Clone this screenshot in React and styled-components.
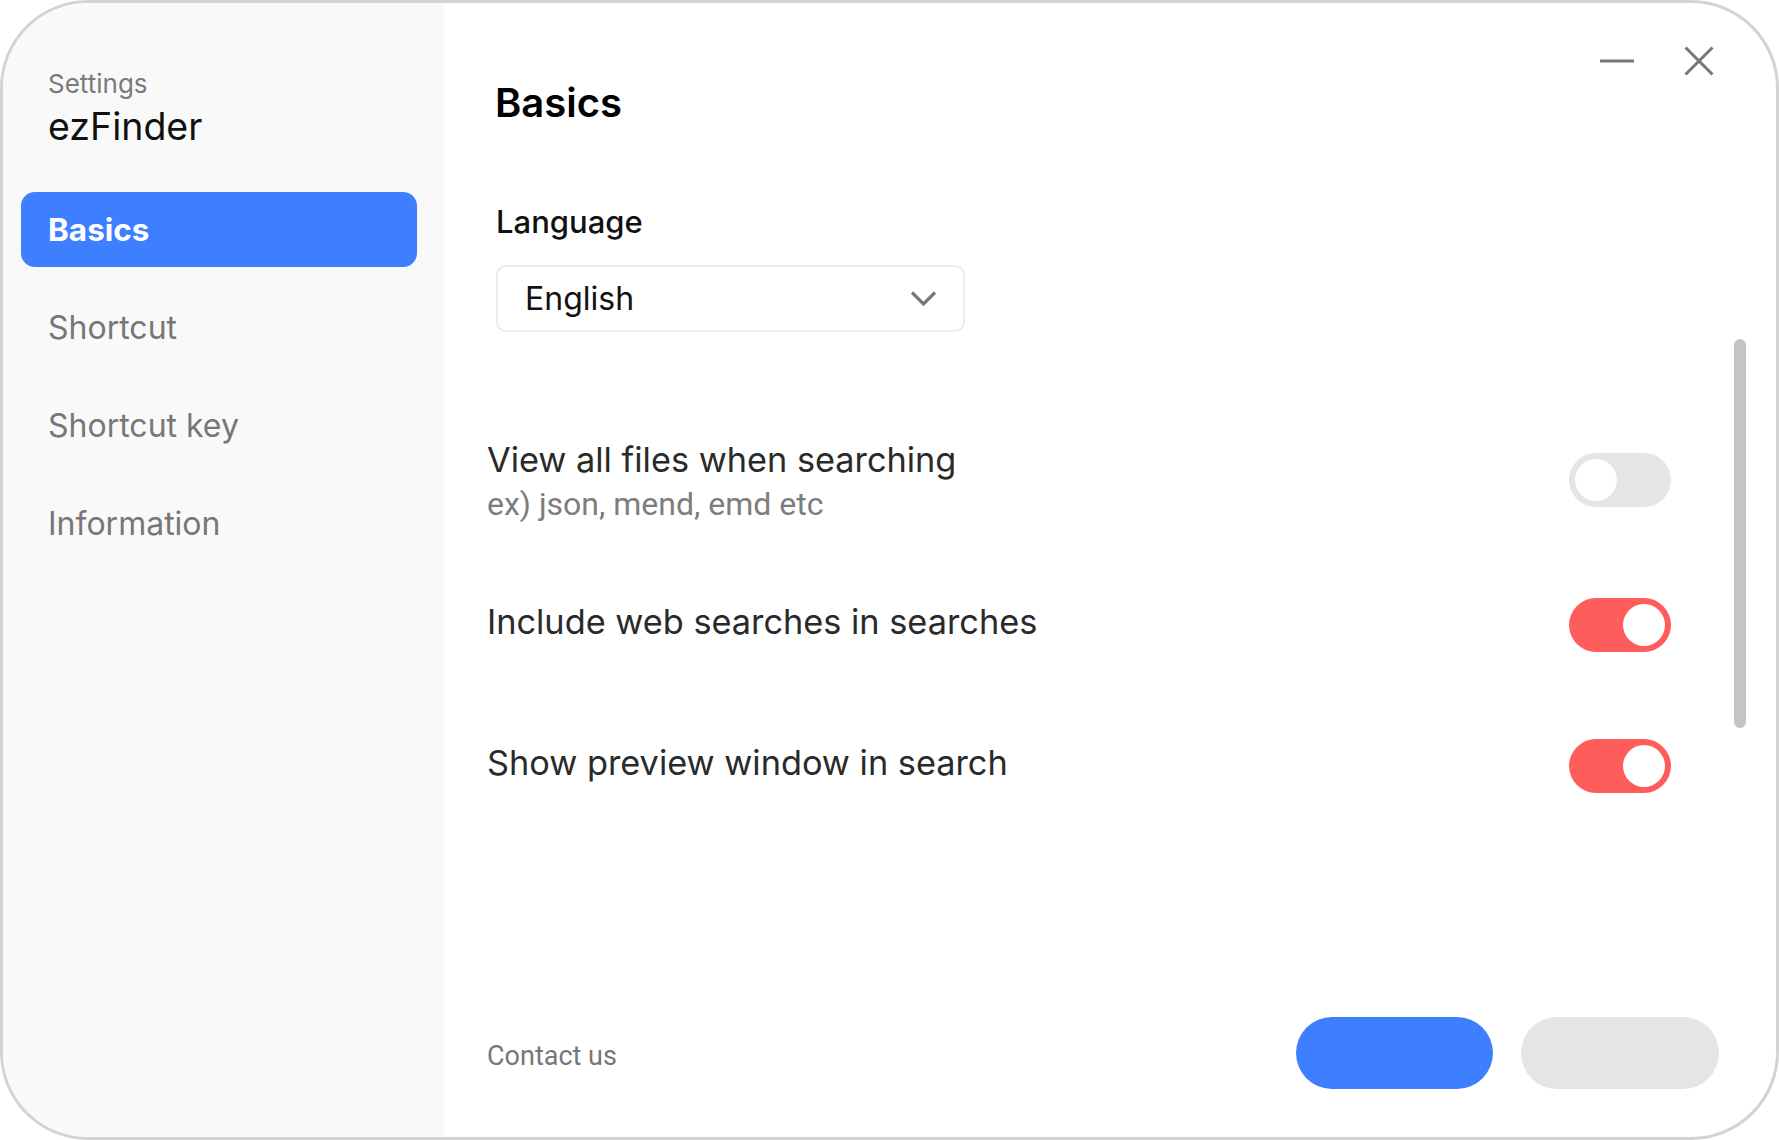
import React from "react";
import styled, { createGlobalStyle, css } from "styled-components";

const GlobalStyle = createGlobalStyle`
  html, body {
    margin: 0;
    padding: 0;
    background: #ffffff;
  }
  * { box-sizing: border-box; }
  body {
    font-family: Inter, "Noto Sans", sans-serif;
    -webkit-font-smoothing: antialiased;
  }
`;

const Window = styled.div`
  width: 1779px;
  height: 1140px;
  border: 3px solid #d3d3d3;
  border-radius: 88px;
  overflow: hidden;
  display: flex;
  background: #ffffff;
`;

const Sidebar = styled.aside`
  width: 441px;
  flex: 0 0 441px;
  background: #f9f9f9;
  padding: 65px 24px 0 18px;
  display: flex;
  flex-direction: column;
`;

const Brand = styled.div`
  padding-left: 27px;
  display: flex;
  flex-direction: column;
`;

const Caption = styled.div`
  font-size: 26px;
  line-height: 32px;
  color: #7a7a7a;
`;

const AppName = styled.div`
  margin-top: 5px;
  font-size: 37.5px;
  line-height: 44px;
  color: #111111;
`;

const Nav = styled.nav`
  margin-top: 43px;
  display: flex;
  flex-direction: column;
  gap: 23px;
`;

const NavItem = styled.div`
  width: 396px;
  height: 75px;
  border-radius: 14px;
  padding-left: 27px;
  display: flex;
  align-items: center;
  font-size: 32px;
  line-height: 40px;
  color: #777777;
  ${(p) =>
    p.$active &&
    css`
      background: #3d7fff;
      color: #ffffff;
      font-weight: 700;
      font-size: 31.5px;
    `}
`;

const Main = styled.main`
  position: relative;
  flex: 1;
  display: flex;
  flex-direction: column;
`;

const Header = styled.div`
  display: flex;
  justify-content: space-between;
  align-items: flex-start;
  padding: 0 62px 0 51px;
`;

const Title = styled.h1`
  margin: 76px 0 0;
  font-size: 40px;
  line-height: 48px;
  font-weight: 600;
  color: #000000;
`;

const Controls = styled.div`
  margin-top: 43px;
  display: flex;
  align-items: center;
  gap: 50px;
`;

const ControlIcon = styled.svg`
  display: block;
  height: 30px;
  color: #777777;
`;

const Field = styled.div`
  padding-left: 52px;
  display: flex;
  flex-direction: column;
  align-items: flex-start;
`;

const FieldLabel = styled.div`
  margin-top: 76px;
  font-size: 31px;
  line-height: 38px;
  font-weight: 500;
  color: #111111;
`;

const Select = styled.div`
  margin-top: 24px;
  width: 469px;
  height: 67px;
  border: 2px solid #ececec;
  border-radius: 10px;
  padding: 0 26px 0 27px;
  display: flex;
  align-items: center;
  justify-content: space-between;
  font-size: 32px;
  color: #111111;
`;

const Options = styled.div`
  padding: 0 105px 0 43px;
  display: flex;
  flex-direction: column;
`;

const OptionRow = styled.div`
  margin-top: ${(p) => p.$mt}px;
  display: flex;
  align-items: center;
  justify-content: space-between;
`;

const OptionText = styled.div`
  display: flex;
  flex-direction: column;
  padding-bottom: 7px;
`;

const OptionTitle = styled.div`
  font-size: 34.3px;
  line-height: 40px;
  color: #2a2a2a;
`;

const OptionHint = styled.div`
  margin: 8px 0 -7px;
  font-family: Roboto, "Noto Sans", sans-serif;
  font-size: 32px;
  line-height: 32px;
  color: #7d7d7d;
`;

const Toggle = styled.div`
  width: 102px;
  height: 54px;
  border-radius: 27px;
  padding: 6px;
  display: flex;
  justify-content: ${(p) => (p.$on ? "flex-end" : "flex-start")};
  background: ${(p) => (p.$on ? "#ff5c5c" : "#e5e5e5")};
`;

const Knob = styled.div`
  width: 42px;
  height: 42px;
  border-radius: 50%;
  background: #ffffff;
`;

const Footer = styled.div`
  margin-top: auto;
  padding: 0 57px 48px 43px;
  display: flex;
  align-items: center;
  justify-content: space-between;
`;

const ContactLink = styled.div`
  font-family: Roboto, "Noto Sans", sans-serif;
  font-size: 27px;
  line-height: 32px;
  color: #777777;
  margin-top: 5px;
`;

const Buttons = styled.div`
  display: flex;
  gap: 28px;
`;

const PillButton = styled.button`
  width: ${(p) => (p.$primary ? 197 : 198)}px;
  height: 72px;
  border: none;
  border-radius: 36px;
  background: ${(p) => (p.$primary ? "#3d7fff" : "#e5e5e5")};
  padding: 0;
`;

const ScrollThumb = styled.div`
  position: absolute;
  right: 30px;
  top: 336px;
  width: 12px;
  height: 389px;
  border-radius: 6px;
  background: #c4c4c4;
`;

const navItems = ["Basics", "Shortcut", "Shortcut key", "Information"];

const options = [
  { title: "View all files when searching", hint: "ex) json, mend, emd etc", on: false, mt: 108 },
  { title: "Include web searches in searches", on: true, mt: 78 },
  { title: "Show preview window in search", on: true, mt: 87 },
];

export default function App() {
  return (
    <>
      <GlobalStyle />
      <Window>
        <Sidebar>
          <Brand>
            <Caption>Settings</Caption>
            <AppName>ezFinder</AppName>
          </Brand>
          <Nav>
            {navItems.map((item, i) => (
              <NavItem key={item} $active={i === 0}>
                {item}
              </NavItem>
            ))}
          </Nav>
        </Sidebar>
        <Main>
          <Header>
            <Title>Basics</Title>
            <Controls>
              <ControlIcon width="34" viewBox="0 0 34 30">
                <line x1="0" y1="15" x2="34" y2="15" stroke="currentColor" strokeWidth="3" />
              </ControlIcon>
              <ControlIcon width="30" viewBox="0 0 30 30">
                <path d="M1.5 1.5 L28.5 28.5 M28.5 1.5 L1.5 28.5" stroke="currentColor" strokeWidth="3" fill="none" />
              </ControlIcon>
            </Controls>
          </Header>
          <Field>
            <FieldLabel>Language</FieldLabel>
            <Select>
              <span>English</span>
              <svg width="27" height="17" viewBox="0 0 27 17">
                <path d="M2 2.5 L13.5 14 L25 2.5" stroke="#777777" strokeWidth="3.2" fill="none" />
              </svg>
            </Select>
          </Field>
          <Options>
            {options.map((o) => (
              <OptionRow key={o.title} $mt={o.mt}>
                <OptionText>
                  <OptionTitle>{o.title}</OptionTitle>
                  {o.hint && <OptionHint>{o.hint}</OptionHint>}
                </OptionText>
                <Toggle $on={o.on}>
                  <Knob />
                </Toggle>
              </OptionRow>
            ))}
          </Options>
          <Footer>
            <ContactLink>Contact us</ContactLink>
            <Buttons>
              <PillButton $primary aria-label="Save" />
              <PillButton aria-label="Cancel" />
            </Buttons>
          </Footer>
          <ScrollThumb />
        </Main>
      </Window>
    </>
  );
}
